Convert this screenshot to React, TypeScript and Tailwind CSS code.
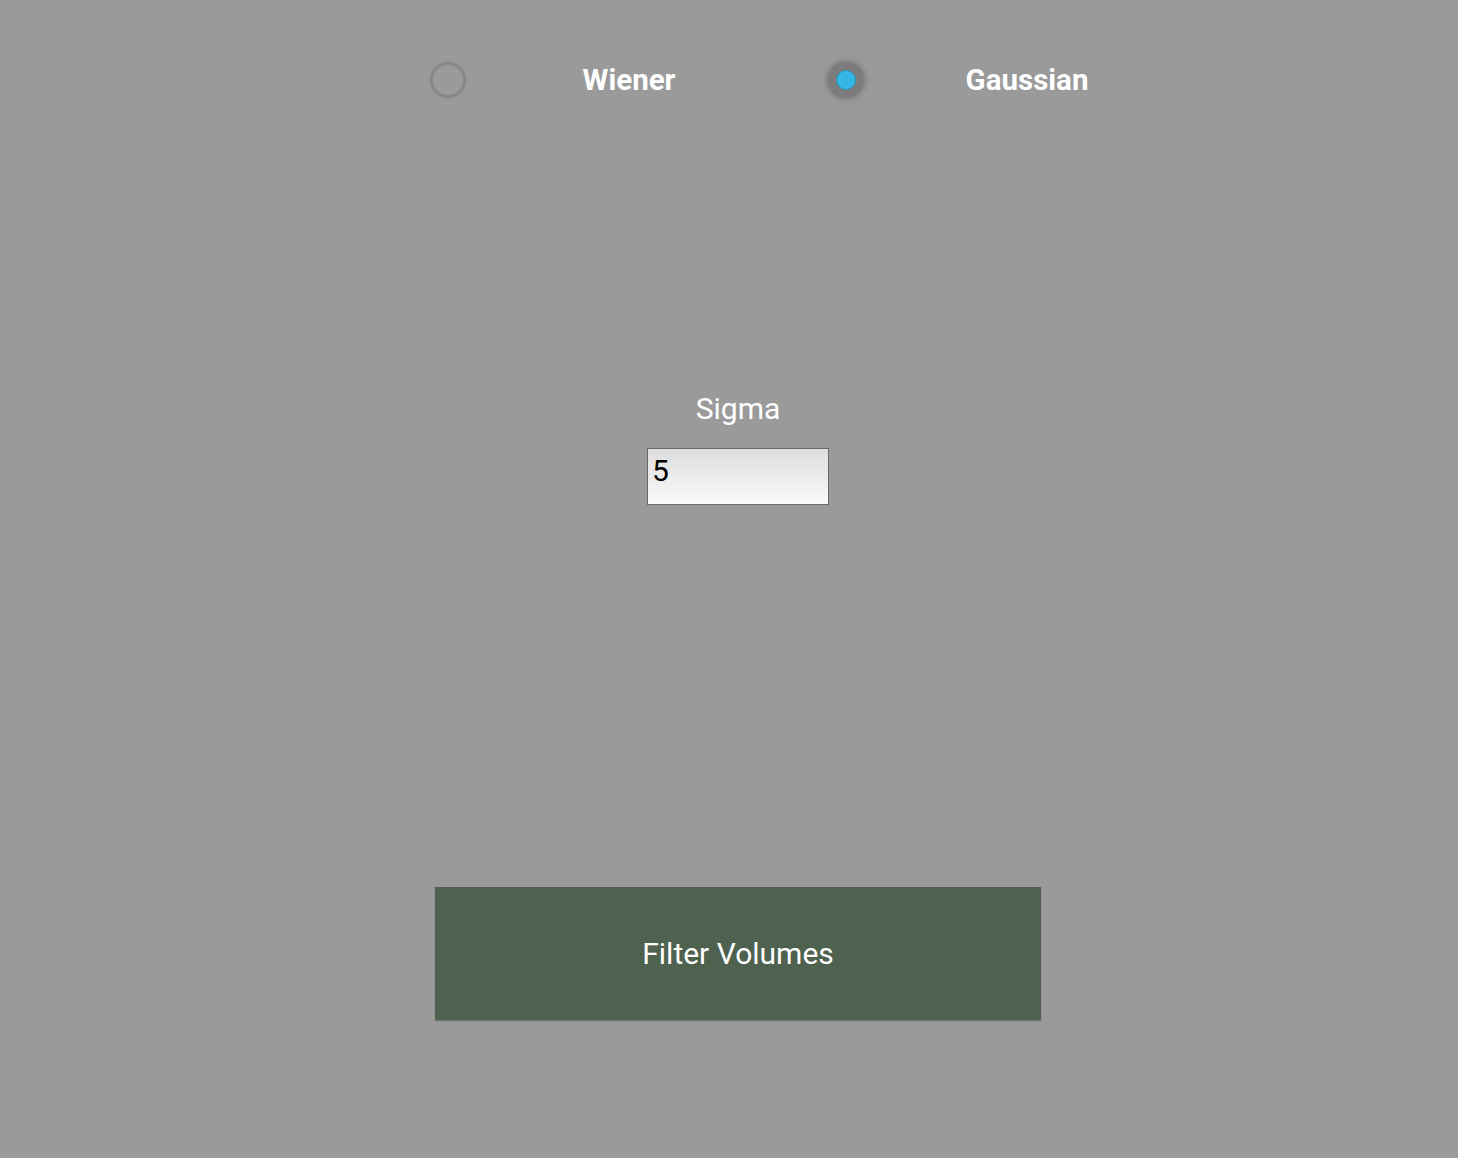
const Radio = ({ checked }: { checked?: boolean }) => (
  <div className="w-9 h-9 flex items-center justify-center shrink-0">
    {checked ? (
      <div className="w-9 h-9 rounded-full bg-[#7c7c7c] shadow-[0_0_4px_2px_rgba(110,110,110,0.6)] flex items-center justify-center">
        <div className="w-5 h-5 rounded-full bg-[#33b5e5] border border-[#2a8fb5]" />
      </div>
    ) : (
      <div className="w-9 h-9 rounded-full border-[3px] border-[#888888] shadow-[0_0_2px_rgba(120,120,120,0.6)]" />
    )}
  </div>
)

export default function App() {
  return (
    <div className="w-full h-[1158px] bg-[#9a9a9a] font-['Roboto',sans-serif] text-white overflow-hidden">
      {/* FILTER TYPE */}
      <div className="flex items-center pt-[62px] ml-[430px] gap-9">
        <div className="flex items-center">
          <Radio />
          <div className="w-[326px] text-center text-[29.5px] font-bold leading-9">Wiener</div>
        </div>
        <div className="flex items-center">
          <Radio checked />
          <div className="w-[326px] text-center text-[29.5px] font-bold leading-9">Gaussian</div>
        </div>
      </div>

      {/* SIGMA */}
      <div className="ml-[435px] w-[606px] flex flex-col items-center">
        <div className="mt-[293px] text-[30px] leading-9">Sigma</div>
        <div className="mt-[21px] w-[182px] h-[57px] border border-[#6a6a6a] bg-gradient-to-b from-[#dedede] to-[#f9f9f9] text-black text-[30px] leading-[44px] pl-[4px]">
          5
        </div>
      </div>

      {/* BUTTON */}
      <div className="ml-[435px] mt-[382px] w-[606px] h-[133px] bg-[#4f614f] shadow-[0_1px_1px_rgba(0,0,0,0.25)] flex items-center justify-center text-[30px]">
        Filter Volumes
      </div>
    </div>
  )
}
